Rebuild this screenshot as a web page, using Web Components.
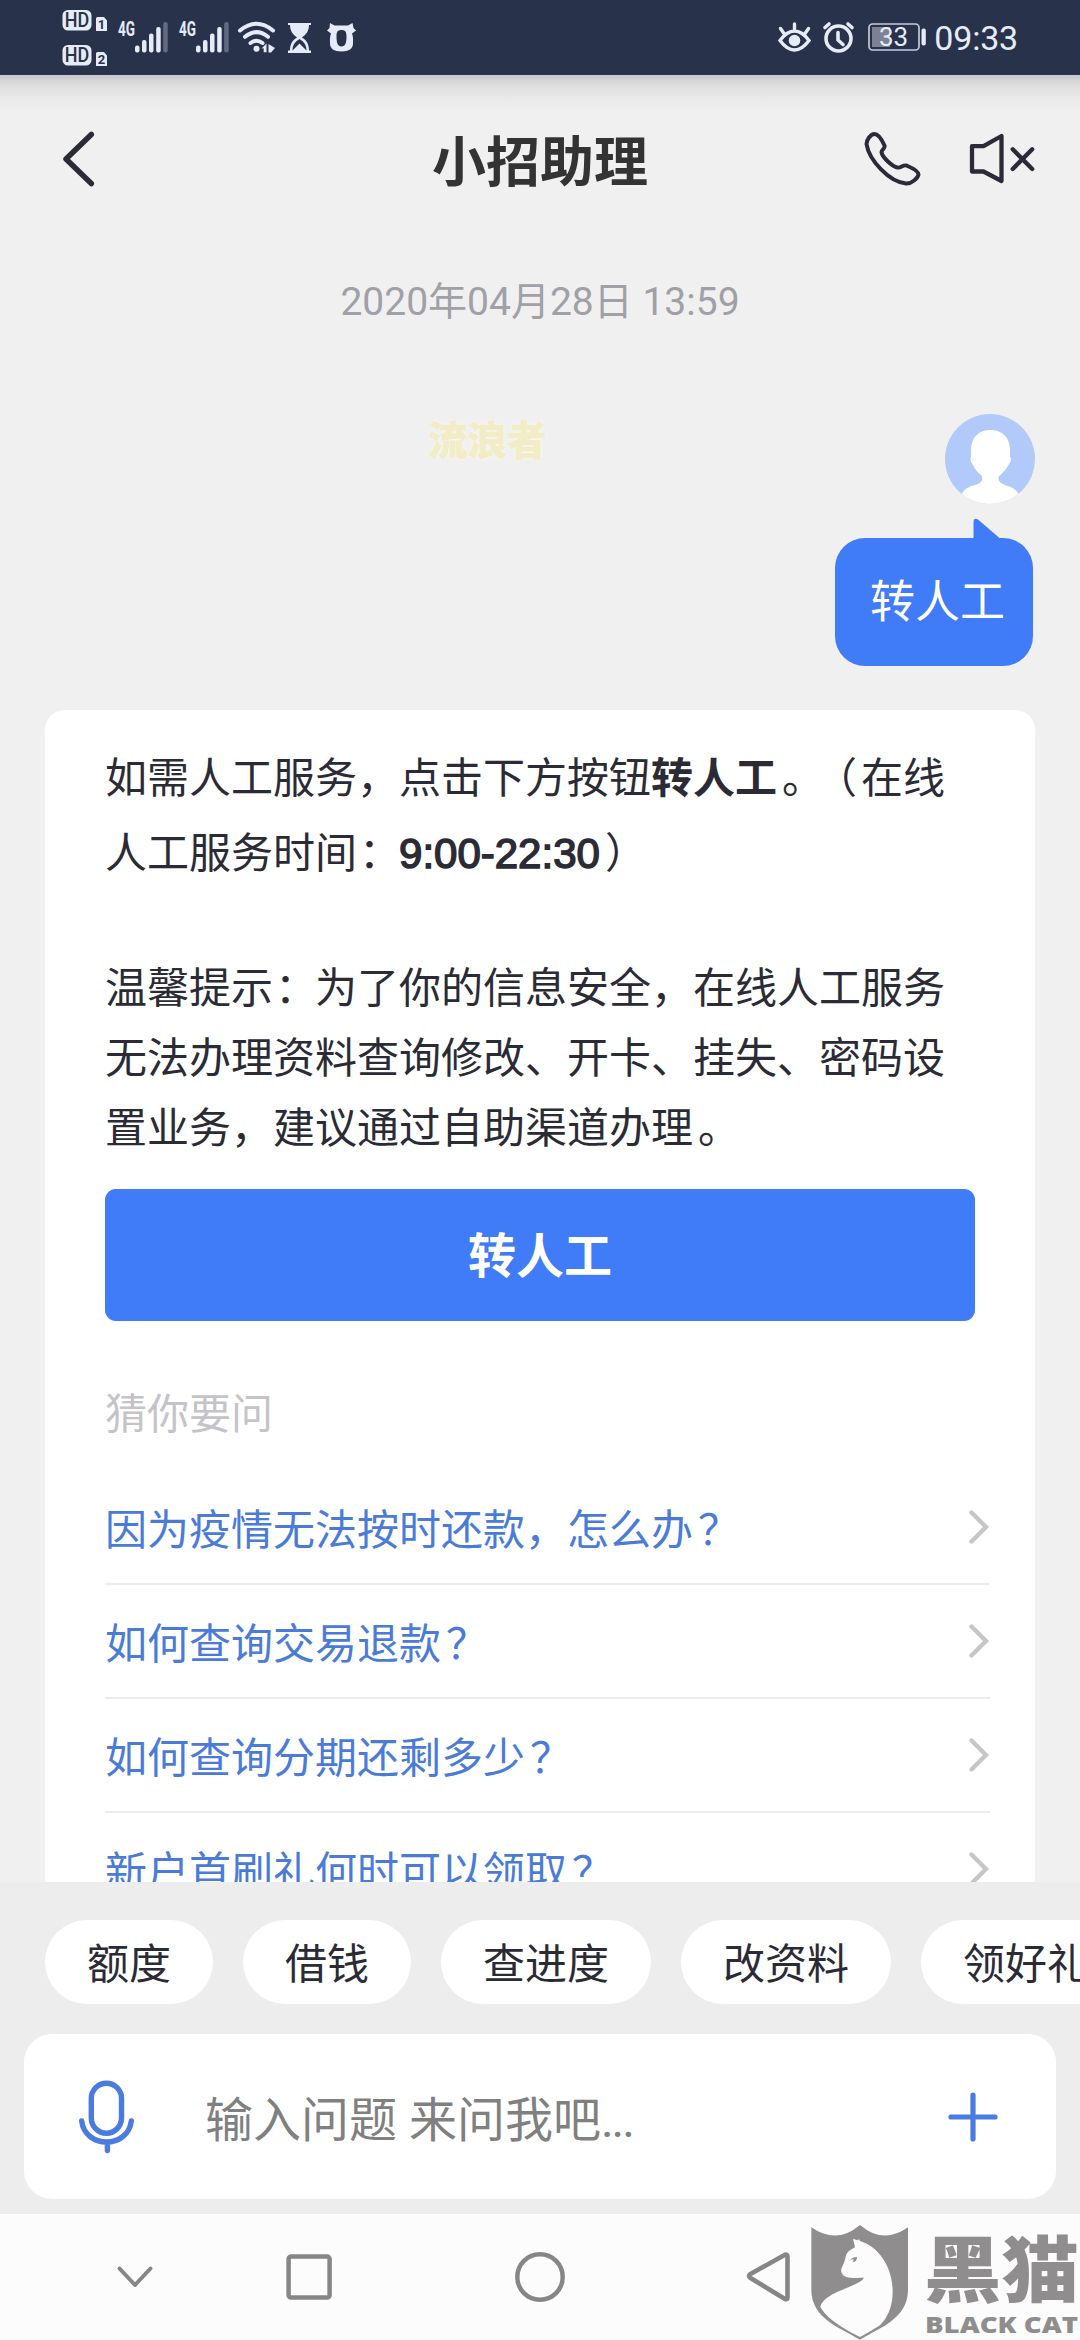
<!DOCTYPE html>
<html lang="zh-CN">
<head>
<meta charset="utf-8">
<title>小招助理</title>
<style>
html,body{margin:0;padding:0}
body{width:1080px;height:2340px;overflow:hidden;background:#f0f0f0;font-family:"Noto Sans CJK SC",sans-serif;color:#2b2b36;text-spacing-trim:space-all}
</style>
</head>
<body>
<assistant-app></assistant-app>
<script>
function define(name, css, html){
  const t=document.createElement('template');
  t.innerHTML='<style>*{box-sizing:border-box}svg{display:block;overflow:visible;flex:none}'+css+'</style>'+html;
  customElements.define(name,class extends HTMLElement{
    constructor(){super();this.attachShadow({mode:'open'}).appendChild(t.content.cloneNode(true));}
  });
}

/* ---------- status bar ---------- */
class SimBadge extends HTMLElement{
  constructor(){super();this.attachShadow({mode:'open'});}
  connectedCallback(){
    this.shadowRoot.innerHTML=`<style>:host{display:block}svg{display:block}</style>
<svg width="46" height="22" viewBox="0 0 46 22"><rect x="0.500" y="0" width="29" height="20.500" rx="5.500" fill="#e6ebf8"/>
<text x="15" y="17" text-anchor="middle" textLength="24.500" lengthAdjust="spacingAndGlyphs" font-family="Roboto" font-weight="500" font-size="19.500" fill="#28324b">HD</text>
<path d="M36.500 7h5.500l3 3.500v10.500h-11v-12a2 2 0 0 1 2.500-2z" fill="#e6ebf8"/>
<text x="39.500" y="18.800" text-anchor="middle" font-family="Roboto" font-weight="700" font-size="13" fill="#28324b">${this.getAttribute('sim')}</text></svg>`;
  }
}
customElements.define('sim-badge',SimBadge);

define('signal-meter',':host{display:block}',`
<svg width="50" height="31" viewBox="0 0 50 31" fill="#e6ebf8">
<text x="0" y="14" textLength="17" lengthAdjust="spacingAndGlyphs" font-family="Roboto" font-weight="700" font-size="19.500">4G</text>
<rect x="17" y="23.500" width="4.500" height="7" rx="2"/><rect x="24" y="18" width="4.500" height="12.500" rx="2"/><rect x="31" y="11.500" width="4.500" height="19" rx="2"/><rect x="38.200" y="5" width="4.500" height="25.500" rx="2"/><rect x="45.200" y="0" width="4.500" height="30.500" rx="2" fill="#626b82"/></svg>`);

define('battery-level',':host{display:block}',`
<svg width="59" height="28" viewBox="0 0 59 28"><rect x="1" y="1" width="50" height="26" rx="3.500" fill="none" stroke="#c3cadb" stroke-width="1.700"/>
<rect x="4" y="4" width="18" height="20" fill="#7c8294"/><rect x="53.500" y="5.500" width="4.300" height="17" rx="2" fill="#e6ebf8"/>
<text x="25.500" y="23" text-anchor="middle" font-family="Roboto" font-size="26" fill="#e6ebf8">33</text></svg>`);

define('status-bar',`
:host{display:flex;height:75px;background:#28324b;padding:0 62px 0 62px;justify-content:space-between;align-items:flex-start;color:#e6ebf8;flex:none}
.l,.r{display:flex;align-items:flex-start}
.r{padding-top:22px}.sims{display:flex;flex-direction:column;gap:12.500px;padding-top:10px;margin-right:10px}
.up{padding-top:22px;display:flex}.time{font:34px/38px Roboto,sans-serif;letter-spacing:-.2px;margin-top:-3px}`,`
<div class="l"><div class="sims"><sim-badge sim="1"></sim-badge><sim-badge sim="2"></sim-badge></div>
<div class="up"><signal-meter></signal-meter><signal-meter style="margin-left:10.500px"></signal-meter>
<svg style="margin-left:9px" width="38" height="31" viewBox="0 0 38 31" fill="none" stroke="#e6ebf8" stroke-width="4" stroke-linecap="round"><path d="M2 8.500Q18.500 -5 35 8.500M7 14.800Q18.500 5.500 30 14.800M12.500 21Q18.500 16.500 24.500 21"/><circle cx="18.500" cy="26.800" r="3" fill="#e6ebf8" stroke="none"/><path d="M23.500 26.500l5-5v8.800h-2.800v-4zM30.500 22l6.500 4-4 4.500h-2.500z" fill="#e6ebf8" stroke="none"/></svg>
<svg style="margin-left:12.500px;margin-top:1px" width="23" height="30" viewBox="0 0 23 30"><path d="M0 0h23v2h-2c0 6-3 9.500-7 12.500c4 2.500 7 6 7 13h2v2.500h-23v-2.500h2c0-7 3-10.500 7-13c-4-3-7-6.500-7-12.500h-2z" fill="#e6ebf8"/><path d="M11.500 16c-5 3-7 6.500-7 11.500l7-7 7 7c0-5-2-8.500-7-11.500z" fill="#28324b"/><path d="M5.500 27.500c1-2 3-2.500 6-5.500c3 3 5 3.500 6 5.500z" fill="#e6ebf8"/></svg>
<svg style="margin-left:16px;margin-top:1px" width="29" height="30" viewBox="0 0 29 30" fill="#e6ebf8"><path fill-rule="evenodd" d="M3 0l4.500 2.500h13.500l4.500-2.500 1 5 2.500 2.500-4 3c1.500 4 1 7 1 10c0 5-4 8-11.500 8s-11.500-3-11.500-8c0-3-.5-6 1-10l-4-3 2.500-2.500zM14.500 7c-4 0-5 2-5 6.500c0 6 1 10 5 10s5-4 5-10c0-4.500-1-6.500-5-6.500z"/></svg></div></div>
<div class="r">
<svg width="33" height="31" viewBox="0 0 33 31" fill="none" stroke="#e6ebf8" stroke-width="3.400" stroke-linecap="round"><path d="M2 18.500Q9 9 16.500 9T31 18.500Q24 28 16.500 28T2 18.500zM16.500 2v5M2.500 6.500l3.500 5M30.500 6.500l-3.500 5"/><circle cx="16.500" cy="18.500" r="5.800" fill="#e6ebf8" stroke="none"/></svg>
<svg style="margin-left:12px" width="31" height="31" viewBox="0 0 31 31" fill="none" stroke="#e6ebf8" stroke-width="3.600" stroke-linecap="round" stroke-linejoin="round"><circle cx="15.500" cy="16.500" r="12.500"/><path d="M15 10.500v7.500l5 4.500M2 5.500l4-3.500M29 5.500l-4-3.500"/></svg>
<battery-level style="margin:1px 7px 0 14px"></battery-level><span class="time">09:33</span></div>`);

/* ---------- title bar ---------- */
define('title-bar',`
:host{display:flex;height:168px;flex:none;padding:0 44px 0 62px;align-items:center;background:linear-gradient(#c9cad0 0,#c9cad0 3px,#d2d2d2 4px,#dedede 11px,#e9e9e9 23px,#f0f0f0 36px)}
.a{flex:1;display:flex;align-items:center}.b{justify-content:flex-end;gap:46px}
h1{margin:-1px 0 0 -18px;font-size:54px;line-height:72px;font-weight:700;color:#333;flex:none}`,`
<div class="a"><svg width="34" height="54" viewBox="0 0 34 54" fill="none" stroke="#2b2b38" stroke-width="5.500" stroke-linecap="round" stroke-linejoin="round"><path d="M29.300 2.500L4 27L29.300 51.500"/></svg></div>
<h1><slot></slot></h1>
<div class="a b"><svg width="58" height="56" viewBox="0 0 58 56" fill="none" stroke="#2b2b38" stroke-width="4" stroke-linejoin="round"><path d="M10.500 3C6.500 3 2.500 9 2.500 13C5 29 25 51 42 52.500C47.500 53 54 47 54.500 43.500C54.500 40 46 36 42.500 34.500C39 33.500 36.500 37.500 33.500 36.500C28 35.500 18 26 17.500 21C17.500 18.500 21.500 17.500 20.500 14.500C18 9 14 3 10.500 3Z"/></svg>
<svg width="68" height="56" viewBox="0 0 68 56" fill="none" stroke="#2b2b38" stroke-width="4.300" stroke-linecap="round" stroke-linejoin="round"><path d="M4 15.200H15.500L33.500 5V50L15.500 40.500H4ZM44.700 18.300L64.200 38M64.200 18.300L44.700 38"/></svg></div>`);

/* ---------- messages ---------- */
define('time-stamp',':host{display:block;text-align:center;font:39px/50px Roboto,"Noto Sans CJK SC",sans-serif;color:#a0a0a7;padding-top:34px}','<slot></slot>');

define('user-message',`
:host{display:flex;flex-direction:column;align-items:flex-end;padding-right:45px;margin-top:87px}
.b{position:relative;margin:34px 2px 0 0;height:128px;border-radius:30px;background:#407bf8;color:#fff;font-size:45px;line-height:122px;padding:0 27px 0 35px;width:198px;white-space:nowrap}
.tail{position:absolute;right:33px;top:-20px}`,`
<svg width="90" height="90" viewBox="0 0 90 90"><defs><clipPath id="c"><circle cx="45" cy="45" r="45"/></clipPath></defs><circle cx="45" cy="45" r="45" fill="#b2cafa"/><path clip-path="url(#c)" fill="#fff" d="M26 36C26 23 34 16 45.500 16S65 23 65 36V43C66.500 44 66 48 64 50C61 56 57 59 53.500 63C53.500 67 55 69 60 71C67 73 71 75 74 81V92H16V81C19 75 23 73 30 71C36 69 38 67 37 62C32 58 30 55 27.500 50C25.500 48 25 45 26 43Z"/></svg>
<div class="b"><svg class="tail" width="27" height="22" viewBox="0 0 27 22"><path d="M0.500 22V4Q0.500 -1 5 1.500L26.500 20V22Z" fill="#407bf8"/></svg><slot></slot></div>`);

define('reply-card',`
:host{display:block;width:990px;margin:44px 0 0 45px;box-sizing:border-box;padding:27px 40px 0 60px;background:#fff;border-radius:20px}`,'<slot></slot>');

define('reply-text',`
:host{display:block;box-sizing:border-box;width:842px;height:var(--h);font-size:42px;line-height:var(--lh,70px);margin-bottom:var(--mb,0);white-space:nowrap;color:#2b2b36}
::slotted(b){font-weight:700}
::slotted(i){font-style:normal;font-family:"Liberation Sans",sans-serif;line-height:1;-webkit-text-stroke:1.500px currentColor}`,'<slot></slot>');

/* punctuation nudged inside its full-width cell */
define('punct-mark',':host{display:inline;margin-left:var(--s,5px);margin-right:calc(-1*var(--s,5px))}','<slot></slot>');

define('action-button',':host{display:block;width:870px;height:132px;border-radius:11px;background:#407bf8;color:#fff;font-size:48px;font-weight:700;line-height:127px;text-align:center}','<slot></slot>');
define('section-label',':host{display:block;margin:60px 0 30px;font-size:42px;line-height:60px;color:#c4c4c8}','<slot></slot>');
define('question-row',`
:host{display:flex;box-sizing:border-box;width:885px;height:114px;align-items:center;justify-content:space-between;border-bottom:2px solid #ececee;color:#4a7bd9;font-size:42px;line-height:60px;white-space:nowrap}`,`
<span><slot></slot></span><svg width="20" height="34" viewBox="0 0 20 34" fill="none" stroke="#c6c6c6" stroke-width="4.300" stroke-linecap="round"><path d="M1.500 2.500L16 17L1.500 31.500"/></svg>`);

/* ---------- composer ---------- */
define('quick-chip',':host{display:block;flex:none;height:84px;border-radius:42px;background:#fff;padding:0 42px;font-size:42px;line-height:82px;color:#2b2b36}','<slot></slot>');
define('composer-panel',`
:host{display:flex;box-sizing:border-box;flex-direction:column;height:332px;flex:none;background:#ededed;padding:38px 0 0 24px}
.chips{display:flex;gap:30px;padding-left:21px;overflow:hidden}
.box{display:flex;align-items:center;margin-top:30px;width:1032px;height:165px;border-radius:28px;background:#fff;padding:0 57px 0 54px}
.ph{flex:1;margin-left:69px;font:48px/70px "Noto Sans CJK SC",sans-serif;color:#808080;margin-top:-1px}
.ph span{font-family:Roboto,sans-serif;letter-spacing:-2px;line-height:1}`,`
<div class="chips"><slot></slot></div>
<div class="box"><svg width="58" height="76" viewBox="0 0 58 76" fill="none" stroke="#4a7be0" stroke-width="5.400" stroke-linecap="round"><rect x="13.300" y="4.200" width="30.200" height="50" rx="15.100"/><path d="M3.700 42C7 70 50 70 53.300 42M29.400 64.500V71.500"/></svg>
<div class="ph">输入问题<span style="letter-spacing:0"> </span>来问我吧<span>...</span></div>
<svg width="52" height="52" viewBox="0 0 52 52" stroke="#4a7be0" stroke-width="5.200" stroke-linecap="round"><path d="M4 26H48M26 4V48"/></svg></div>`);

/* ---------- system navigation ---------- */
define('system-nav',`
:host{display:flex;height:126px;flex:none;background:#fcfcfc;padding-left:116px;box-sizing:border-box;align-items:center}`,`
<svg width="38" height="50" viewBox="0 0 38 50" fill="none" stroke="#868686" stroke-width="4" stroke-linecap="round" stroke-linejoin="round"><path d="M3.500 16.500L19 33L34.500 16.500"/></svg>
<svg style="margin-left:130px" width="50" height="50" viewBox="0 0 50 50" fill="none" stroke="#868686" stroke-width="4.500"><rect x="4.600" y="4.600" width="41" height="41" rx="2.500"/></svg>
<svg style="margin-left:181px" width="50" height="50" viewBox="0 0 50 50" fill="none" stroke="#868686" stroke-width="4.500"><circle cx="25" cy="25" r="22.700"/></svg>
<svg style="margin-left:181px" width="46" height="50" viewBox="0 0 46 50" fill="none" stroke="#868686" stroke-width="4.600" stroke-linejoin="round"><path d="M3 24Q3 23 4.500 22L39 2.800Q41.500 2 41.500 4.500V45.500Q41.500 48 39 47L4.500 26Q3 25 3 24Z"/></svg>`);

define('cat-mark',`
:host{display:block;position:absolute;left:810px;top:2223px;pointer-events:none}`,`
<svg width="270" height="117" viewBox="0 0 270 117"><g transform="scale(.33333) translate(-270 -99)">
<path fill="#8f8d8e" d="M274 112Q350 165 420 105Q490 165 564 112V300C564 385 480 413 420 449C360 413 274 385 274 300Z"/>
<path fill="#fcfcfc" d="M399 146L412 151L417 148L420 153C475 170 518 230 518 305C518 352 500 388 478 407C460 418 440 430 420 441C375 418 318 385 301 350C315 303 420 290 432 263C415 262 388 268 374 259C365 252 361 245 365 234C370 222 375 213 377 200C382 182 395 178 405 172Z"/>
<path fill="#8f8d8e" d="M390 210Q398 200 411 201Q411 216 398 216Q402 210 400 207Q395 208 390 210Z"/></g>
<g fill="#8f8d8e"><text x="114" y="73" textLength="155" lengthAdjust="spacingAndGlyphs" font-family="Noto Sans CJK SC" font-weight="900" font-size="72">黑猫</text>
<text x="115" y="110" textLength="153" lengthAdjust="spacingAndGlyphs" font-family="Open Sans" font-weight="800" font-size="23.500">BLACK CAT</text></g></svg>`);

define('user-mark',':host{display:block;position:absolute;left:428px;top:410px;font-size:39.500px;line-height:56px;font-weight:900;color:#f2edc6;-webkit-text-stroke:.6px #f2edc6;text-shadow:0 0 3px #fff}','<slot></slot>');

define('assistant-app',`
:host{display:flex;flex-direction:column;width:1080px;height:2340px;position:relative;overflow:hidden}
main{flex:1;min-height:0;overflow:hidden;background:#f0f0f0}`,`
<status-bar></status-bar>
<title-bar>小招助理</title-bar>
<main>
<time-stamp>2020年04月28日 13:59</time-stamp>
<user-message>转人工</user-message>
<reply-card>
<reply-text style="--lh:75px;--h:150px;--mb:63px">如需人工服务，点击下方按钮<b>转人工</b><punct-mark>。</punct-mark><punct-mark style="--s:-4px">（</punct-mark>在线<br>人工服务时间<punct-mark style="--s:2px">：</punct-mark><i>9:00-22:30</i><punct-mark>）</punct-mark></reply-text>
<reply-text style="--h:210px;--mb:29px">温馨提示<punct-mark style="--s:2px">：</punct-mark>为了你的信息安全，在线人工服务<br>无法办理资料查询修改、开卡、挂失、密码设<br>置业务，建议通过自助渠道办理<punct-mark>。</punct-mark></reply-text>
<action-button>转人工</action-button>
<section-label>猜你要问</section-label>
<question-row>因为疫情无法按时还款，怎么办<punct-mark>？</punct-mark></question-row>
<question-row>如何查询交易退款<punct-mark>？</punct-mark></question-row>
<question-row>如何查询分期还剩多少<punct-mark>？</punct-mark></question-row>
<question-row>新户首刷礼何时可以领取<punct-mark>？</punct-mark></question-row>
</reply-card>
</main>
<composer-panel><quick-chip>额度</quick-chip><quick-chip>借钱</quick-chip><quick-chip>查进度</quick-chip><quick-chip>改资料</quick-chip><quick-chip>领好礼</quick-chip></composer-panel>
<system-nav></system-nav>
<user-mark>流浪者</user-mark>
<cat-mark></cat-mark>`);
</script>
</body>
</html>
